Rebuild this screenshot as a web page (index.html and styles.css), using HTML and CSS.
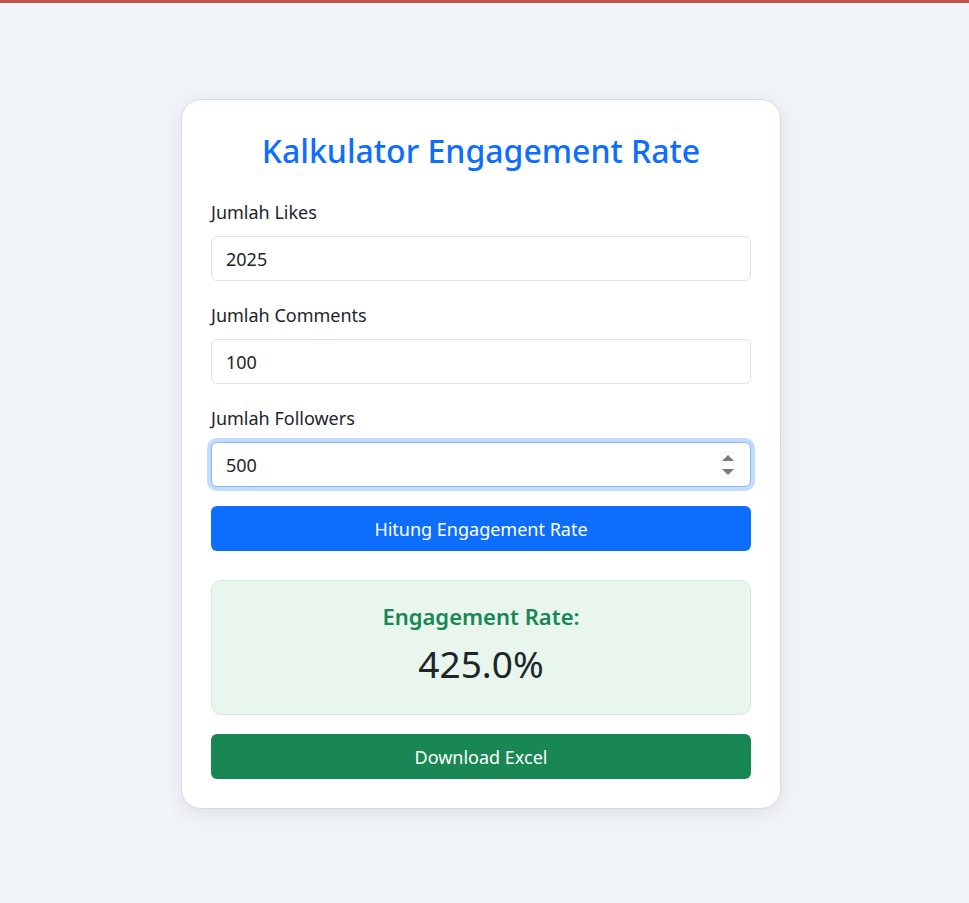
FILE: index.html
```html
<!DOCTYPE html>
<html lang="id">
<head>
<meta charset="utf-8">
<title>Kalkulator Engagement Rate</title>
<link rel="stylesheet" href="styles.css">
</head>
<body>
<div class="topbar"></div>
<main class="page">
  <section class="card">
    <h1 class="title">Kalkulator Engagement Rate</h1>
    <div class="field">
      <label class="label" for="likes">Jumlah Likes</label>
      <input class="input" id="likes" type="text" value="2025">
    </div>
    <div class="field">
      <label class="label" for="comments">Jumlah Comments</label>
      <input class="input" id="comments" type="text" value="100">
    </div>
    <div class="field field-last">
      <label class="label" for="followers">Jumlah Followers</label>
      <div class="input-wrap">
        <input class="input focused" id="followers" type="text" value="500">
        <span class="spin">
          <svg width="14" height="26" viewBox="0 0 14 26"><path d="M1 9 L7 3 L13 9 Z" fill="#7a7a7a"/><path d="M1 17 L7 23 L13 17 Z" fill="#7a7a7a"/></svg>
        </span>
      </div>
    </div>
    <button class="btn btn-primary" type="button">Hitung Engagement Rate</button>
    <div class="result">
      <div class="result-title">Engagement Rate:</div>
      <div class="result-value">425.0%</div>
    </div>
    <button class="btn btn-success" type="button">Download Excel</button>
  </section>
</main>
</body>
</html>
```
FILE: styles.css
```css
* { box-sizing: border-box; }
html, body { margin: 0; padding: 0; }
body {
  background: #f0f3f8;
  font-family: "Noto Sans", "Open Sans", sans-serif;
  color: #212529;
  min-height: 903px;
}
.topbar { height: 3px; background: #c0574f; }
.page {
  display: flex;
  justify-content: center;
  padding: 96px 7px 0 0;
}
.card {
  width: 600px;
  background: #fff;
  border: 1px solid #d9dce0;
  border-radius: 20px;
  box-shadow: 0 4px 18px rgba(0, 0, 0, 0.08);
  padding: 29px;
  display: flex;
  flex-direction: column;
}
.title {
  margin: 0 0 26px;
  text-align: center;
  color: #0d6efd;
  font-size: 32px;
  font-weight: 500;
  line-height: 44px;
}
.field { display: flex; flex-direction: column; margin-bottom: 21px; }
.field-last { margin-bottom: 19px; }
.label { font-size: 18px; line-height: 26px; margin-bottom: 11px; }
.input-wrap { position: relative; }
.input {
  width: 100%;
  height: 45px;
  border: 1px solid #dee2e6;
  border-radius: 6px;
  padding: 0 14px;
  font: inherit;
  font-size: 18px;
  color: #212529;
  background: #fff;
  outline: none;
}
.input.focused {
  border-color: #86b7fe;
  box-shadow: 0 0 0 4px rgba(13, 110, 253, 0.25);
}
.spin {
  position: absolute;
  right: 16px;
  top: 9px;
  width: 15px;
  height: 27px;
  background: #fafafa;
  display: flex;
  align-items: center;
  justify-content: center;
}
.btn {
  width: 100%;
  height: 45px;
  border: 0;
  border-radius: 6px;
  color: #fff;
  font: inherit;
  font-size: 18px;
  cursor: pointer;
}
.btn-primary { background: #0d6efd; }
.btn-success { background: #198754; }
.result {
  margin: 29px 0 19px;
  background: #e8f6ed;
  border: 1px solid #d1ecdb;
  border-radius: 10px;
  height: 135px;
  display: flex;
  flex-direction: column;
  align-items: center;
  padding-top: 19px;
}
.result-title {
  color: #198754;
  font-size: 22px;
  font-weight: 600;
  line-height: 32px;
}
.result-value {
  font-size: 37px;
  line-height: 48px;
  margin-top: 8px;
}
```
